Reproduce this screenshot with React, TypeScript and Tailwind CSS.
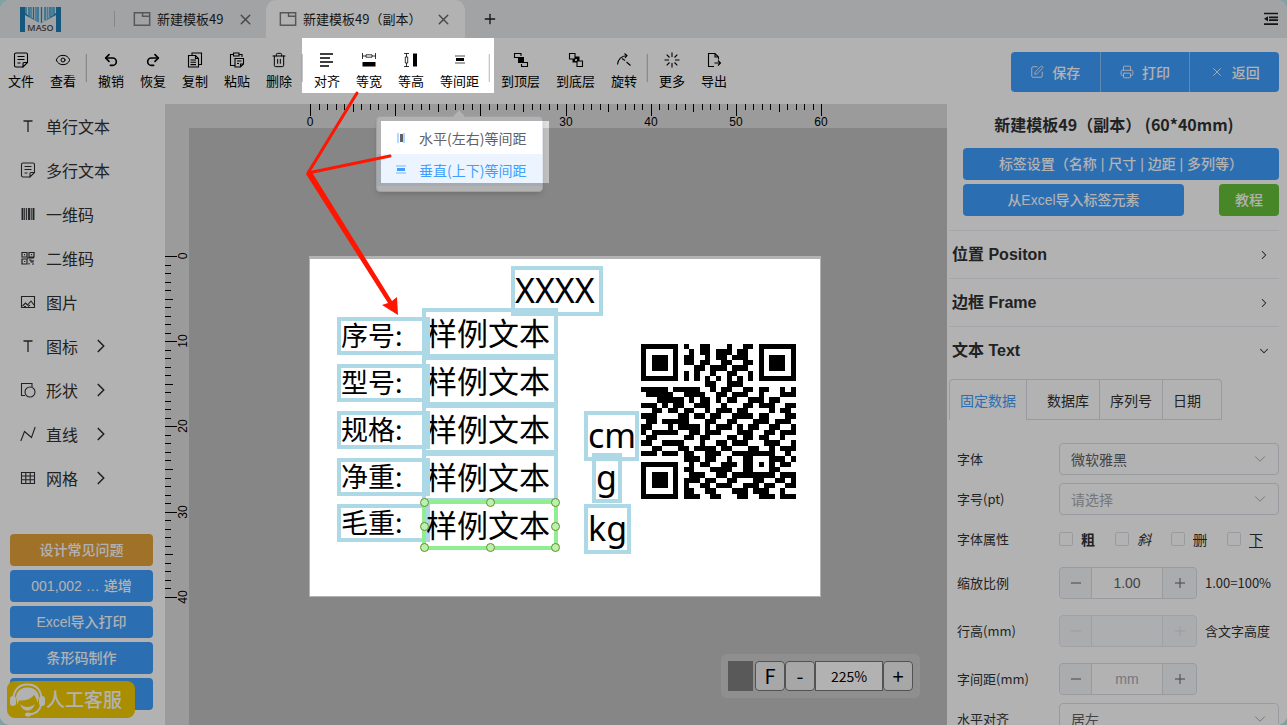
import type { ReactNode } from "react";
import { ChevronDown, ChevronRight, Eye, Minus, Plus, Printer, Redo2, SquarePen, Trash2, Undo2, X } from "lucide-react";

/* ---------- icons ---------- */

function Svg({ children, size = 16, className = "" }: { children: ReactNode; size?: number; className?: string }) {
  return (
    <svg width={size} height={size} viewBox="0 0 16 16" fill="none" stroke="currentColor" strokeWidth="1.1" className={className} aria-hidden="true">
      {children}
    </svg>
  );
}

const NoteIcon = () => (
  <Svg>
    <path d="M9.500 15H3A1.500 1.500 0 0 1 1.500 13.500V2.500A1.500 1.500 0 0 1 3 1H13A1.500 1.500 0 0 1 14.500 2.500V10.500L10 15V11.500A1 1 0 0 1 11 10.500H14.500M4.500 4.500H11.500M4.500 7.500H11.500M4.500 11H7.500" />
  </Svg>
);

const CopyIcon = () => (
  <Svg>
    <path d="M5 3.500V1H14.500V12.500H12M1.500 3.500H8.500L11.500 6.500V15H1.500zM8.500 3.500V6.500H11.500M3.500 8H9M3.500 10.300H9M3.500 12.600H9" />
  </Svg>
);

const PasteIcon = () => (
  <Svg>
    <path d="M5.500 13.500H1.500V2.500H4.500M10 2.500H13V5M4.500 1H10V4H4.500zM6 6.500H14.500V12L11.500 15H6zM14.500 12H11.500V15M8 9H12.500M8 11.500H10" />
  </Svg>
);

const AlignIcon = () => (
  <Svg>
    <path d="M1 2H14M1 6H11M1 10H14M1 14H10" strokeWidth="1.500" />
  </Svg>
);

const SameWidthIcon = () => (
  <Svg>
    <path d="M1.500 1V7M14.500 1V7M1.500 4H5M11 4H14.500M5 2.800H11V5.200H5z" strokeWidth="0.8" />
    <rect x="1.500" y="10" width="13" height="4.500" fill="currentColor" stroke="none" />
  </Svg>
);

const SameHeightIcon = () => (
  <Svg>
    <path d="M1 1.500H6M1 14.500H6M3.500 1.500V5M3.500 11V14.500M2.300 5H4.700V11H2.300z" strokeWidth="0.8" />
    <rect x="10" y="1.500" width="4" height="13" fill="currentColor" stroke="none" />
  </Svg>
);

const SpacingIcon = () => (
  <Svg>
    <rect x="3" y="3" width="10" height="2" fill="currentColor" stroke="none" opacity="0.35" />
    <rect x="4" y="6" width="8" height="3" fill="currentColor" stroke="none" />
    <rect x="3" y="10" width="10" height="2" fill="currentColor" stroke="none" opacity="0.35" />
  </Svg>
);

const SpacingXIcon = () => (
  <Svg>
    <rect x="4" y="3" width="2" height="10" fill="#409eff" stroke="none" opacity="0.4" />
    <rect x="7" y="4" width="3" height="8" fill="currentColor" stroke="none" />
    <rect x="10" y="3" width="2" height="10" fill="#409eff" stroke="none" opacity="0.4" />
  </Svg>
);

const ToFrontIcon = () => (
  <Svg>
    <path d="M5 5.500H1.500V1.500H8V4M11 10.500H14.500V14.500H8.500V12" />
    <rect x="5" y="5" width="6" height="6" fill="currentColor" stroke="none" />
  </Svg>
);

const ToBackIcon = () => (
  <Svg>
    <path d="M1.500 1.500H7V7H1.500zM9 9H14.500V14.500H9z" />
    <path d="M7 4.500H11.500V9H9V7H7zM4.500 7V10.500H9V9H7V7z" fill="currentColor" stroke="none" />
  </Svg>
);

const RotateIcon = () => (
  <Svg>
    <path d="M1.500 12.500C2 8 5 4 11 3.500M8.500 1.500L11 3.500L9 6M6 6.500L9 8.500M10.500 10L14.500 13.500" />
  </Svg>
);

const MoreIcon = () => (
  <Svg>
    <path d="M8 .5V5M8 11V15.500M.5 8H5M11 8H15.500M2.700 2.700L5.500 5.500M10.500 10.500L13.300 13.300M2.700 13.300L5.500 10.500M10.500 5.500L13.300 2.700" />
  </Svg>
);

const ExportIcon = () => (
  <Svg>
    <path d="M12.500 7.500V5L9 1.500H2.500V14.500H8M9 1.500V5H12.500M8.500 11H14.500M12 8.500L14.500 11L12 13.500" />
  </Svg>
);

const TextIcon = () => (
  <Svg>
    <path d="M3.500 3H12.500M8 3V14" strokeWidth="1.300" />
  </Svg>
);

const BarcodeIcon = () => (
  <Svg>
    <path d="M2.500 2V14M9 2V14M13.500 2V14" strokeWidth="1.900" />
    <path d="M4.700 2V14M6.600 2V14M11.200 2V14" strokeWidth="1" />
  </Svg>
);

const QrIcon = () => (
  <Svg>
    <path d="M2 2.500H7V7H2zM9 2.500H14V7H9zM2 9H7V14H2zM4 4.700H5.200M11 4.700H12.200M4 11.500H5.200M7 8H14M9 10H11V12H13V10M9 13V14.500M12 14H14" strokeWidth="1.200" />
  </Svg>
);

const PictureIcon = () => (
  <Svg>
    <path d="M1.500 2.500H14.500V13.500H1.500zM2.500 12L5.500 9L7.500 11L11 7L14 11M4 12.500H6M8 12.500L10 11" />
  </Svg>
);

const ShapeIcon = () => (
  <Svg>
    <path d="M5 13.500H1.500V1.500H12V5" />
    <circle cx="10" cy="10" r="5" />
  </Svg>
);

const LineIcon = () => (
  <Svg>
    <path d="M.8 15L4.500 5.500L11.500 11.500L15.200 1" />
  </Svg>
);

const GridIcon = () => (
  <Svg>
    <path d="M1.500 2.500H14.500V13.500H1.500zM1.500 6H14.500M1.500 9.800H14.500M5.800 2.500V13.500M10.200 2.500V13.500" />
  </Svg>
);

const TabIcon = () => (
  <Svg size={18} className="text-[#7d7d80]">
    <path d="M1.200 2.500H14.800V13.500H1.200zM8.500 2.500V5.500H14.800" strokeWidth="1.300" />
  </Svg>
);

const FoldIcon = () => (
  <Svg>
    <path d="M1 2.500H15M6 6.300H15M6 9.200H15M1 13.200H15" strokeWidth="1.700" />
    <path d="M1 7.800L5 5.200V10.400z" fill="currentColor" stroke="none" />
  </Svg>
);

const SupportIcon = () => (
  <svg width="37" height="34" viewBox="0 0 37 34" fill="none" aria-hidden="true">
    <path d="M4.500 14C6 5 11 1.500 18.500 1.500S31 5 32.500 14" stroke="#fff" strokeWidth="1.800" />
    <path d="M7 14C8 7 13 4.500 18.500 4.500S29 7 30 14L28.500 20C28 17 27 15 25 12C21 17 14 18 10 17.500C9 19 9 21 8.500 22z" fill="#fff" />
    <path d="M11 21C13 26 15.500 27.500 18.500 27.500S24 26 26 21C22 25 15 25 11 21z" fill="#fff" />
    <rect x="1" y="13" width="6" height="10" rx="3" fill="#fff" />
    <rect x="30" y="13" width="6" height="10" rx="3" fill="#fff" />
    <path d="M32 22C31 28 26 31 19 31.500" stroke="#fff" strokeWidth="1.800" />
    <ellipse cx="19" cy="31.500" rx="3" ry="2" fill="#fff" />
  </svg>
);

function Logo() {
  return (
    <svg width="41" height="25" viewBox="0 0 41 25" role="img" aria-label="MASO">
      <rect width="41" height="25" fill="#1f7fb5" />
      <path d="M5 0H36V6L20.500 17L5 6z" fill="#dfe6ea" />
      <path d="M6 0V7M9 0V9M13.500 0V12M18 0V15M21.500 0V16M25 0V13M30 0V10M34 0V8" stroke="#2589bf" strokeWidth="1.300" />
      <path d="M11 0V11M16 0V14M27.500 0V12M32 0V9" stroke="#5fb4dc" strokeWidth="1.800" />
      <path d="M5 8L20.500 16.500L36 8V25H5z" fill="#e8eaec" />
      <text x="20.500" y="24" textAnchor="middle" fontSize="9" fontWeight="600" fontFamily="Open Sans, sans-serif" fill="#4a4a4a">
        MASO
      </text>
    </svg>
  );
}

/* ---------- header + toolbar ---------- */

function Header() {
  return (
    <header className="flex h-[38px] shrink-0 items-stretch bg-[#e8eaec] text-[13px] text-[#1d1d1f]">
      <div className="flex w-[114px] items-center pl-5">
        <Logo />
      </div>
      <div className="my-auto h-4 w-px bg-[#bfc1c4]" />
      <div className="flex w-[151px] items-center pl-[18px]">
        <TabIcon />
        <span className="ml-1.5">新建模板49</span>
        <button aria-label="关闭" className="ml-[14px] text-[#66686b]">
          <X size={17} strokeWidth={2} />
        </button>
      </div>
      <div className="flex w-[199px] items-center rounded-t-[10px] bg-white pl-[13px]">
        <TabIcon />
        <span className="ml-1.5">新建模板49（副本）</span>
        <button aria-label="关闭" className="ml-auto mr-[13px] text-[#66686b]">
          <X size={17} strokeWidth={2} />
        </button>
      </div>
      <button aria-label="新建" className="w-[50px] pl-[17px]">
        <Plus size={16} strokeWidth={2} />
      </button>
      <button aria-label="菜单" className="ml-auto mr-2">
        <FoldIcon />
      </button>
    </header>
  );
}

function Tool({ icon, label, wide = false }: { icon: ReactNode; label: string; wide?: boolean }) {
  return (
    <button className={`flex flex-col items-center gap-[3px] whitespace-nowrap text-[13px] leading-5 ${wide ? "w-[55px]" : "w-[42px]"}`}>
      {icon}
      {label}
    </button>
  );
}

const Divider = () => <div className="ml-px mr-[3px] mt-0.5 h-7 w-[2px] border-r border-[#c4c6cc] bg-[#eee]" />;

function SpacingMenu() {
  return (
    <div className="absolute -left-[56px] top-[64px] z-10 w-[167px] rounded border border-[#e4e7ed] bg-white py-[5px] text-sm shadow-md">
      <div className="absolute -top-[5px] left-[78px] size-2 rotate-45 bg-white" />
      <button className="flex h-8 w-full items-center gap-[10px] whitespace-nowrap pl-4 text-[#606266]">
        <SpacingXIcon />
        水平(左右)等间距
      </button>
      <button className="flex h-8 w-full items-center gap-[10px] whitespace-nowrap bg-[#ecf5ff] pl-4 text-[#409eff]">
        <SpacingIcon />
        垂直(上下)等间距
      </button>
    </div>
  );
}

function Toolbar() {
  return (
    <div className="flex h-[66px] shrink-0 items-start bg-white pt-[14px] text-black">
      <div className="flex">
        <Tool icon={<NoteIcon />} label="文件" />
        <Tool icon={<Eye size={16} strokeWidth={1.5} />} label="查看" />
        <Divider />
        <Tool icon={<Undo2 size={16} strokeWidth={2.5} />} label="撤销" />
        <Tool icon={<Redo2 size={16} strokeWidth={2.5} />} label="恢复" />
        <Tool icon={<CopyIcon />} label="复制" />
        <Tool icon={<PasteIcon />} label="粘贴" />
        <Tool icon={<Trash2 size={16} strokeWidth={1.5} />} label="删除" />
        <Divider />
        <Tool icon={<AlignIcon />} label="对齐" />
        <Tool icon={<SameWidthIcon />} label="等宽" />
        <Tool icon={<SameHeightIcon />} label="等高" />
        <div className="relative">
          <Tool icon={<SpacingIcon />} label="等间距" wide />
          <SpacingMenu />
        </div>
        <Divider />
        <Tool icon={<ToFrontIcon />} label="到顶层" wide />
        <Tool icon={<ToBackIcon />} label="到底层" wide />
        <Tool icon={<RotateIcon />} label="旋转" />
        <Divider />
        <Tool icon={<MoreIcon />} label="更多" />
        <Tool icon={<ExportIcon />} label="导出" />
      </div>
      <div className="ml-auto mr-2 flex h-10 w-[268px] divide-x divide-[#8cc5ff] overflow-hidden rounded bg-[#409eff] text-sm font-medium text-white">
        <button className="flex flex-1 items-center justify-center gap-2">
          <SquarePen size={14} strokeWidth={1.5} />
          保存
        </button>
        <button className="flex flex-1 items-center justify-center gap-2">
          <Printer size={14} strokeWidth={1.5} />
          打印
        </button>
        <button className="flex flex-1 items-center justify-center gap-2">
          <X size={14} strokeWidth={1.5} />
          返回
        </button>
      </div>
    </div>
  );
}

/* ---------- left sidebar ---------- */

const tools = [
  { label: "单行文本", icon: <TextIcon /> },
  { label: "多行文本", icon: <NoteIcon /> },
  { label: "一维码", icon: <BarcodeIcon /> },
  { label: "二维码", icon: <QrIcon /> },
  { label: "图片", icon: <PictureIcon /> },
  { label: "图标", icon: <TextIcon />, more: true },
  { label: "形状", icon: <ShapeIcon />, more: true },
  { label: "直线", icon: <LineIcon />, more: true },
  { label: "网格", icon: <GridIcon />, more: true },
];

function Sidebar() {
  return (
    <aside className="relative flex w-[165px] shrink-0 flex-col overflow-hidden bg-white">
      {tools.map((t) => (
        <button key={t.label} className="flex h-11 shrink-0 items-center pl-5 text-base text-[#303133]">
          {t.icon}
          <span className="ml-[10px]">{t.label}</span>
          {t.more && <ChevronRight size={22} strokeWidth={1.8} className="ml-3" />}
        </button>
      ))}
      <div className="ml-[10px] mr-3 mt-[34px] flex flex-col gap-1 font-['Liberation_Sans','Noto_Sans_CJK_SC',sans-serif] text-sm font-medium text-white">
        <button className="h-8 shrink-0 rounded bg-[#e6a23c]">设计常见问题</button>
        <button className="h-8 shrink-0 rounded bg-[#409eff]">001,002 … 递增</button>
        <button className="h-8 shrink-0 rounded bg-[#409eff]">Excel导入打印</button>
        <button className="h-8 shrink-0 rounded bg-[#409eff]">条形码制作</button>
        <button aria-label="帮助" className="h-8 shrink-0 rounded bg-[#409eff]" />
      </div>
      <button className="absolute bottom-[7px] left-[7px] flex h-[37px] w-32 items-center whitespace-nowrap rounded-lg bg-[#f1cc00] pl-0.5 text-[19px] font-medium text-white">
        <SupportIcon />
        人工客服
      </button>
    </aside>
  );
}

/* ---------- canvas ---------- */

const MM = 8.52;
const tickLength = (i: number) => (i % 10 === 0 ? 12 : i % 5 === 0 ? 8 : 6);

function TopRuler() {
  return (
    <svg className="h-6 w-full shrink-0 bg-[#dfdfdf] font-['Liberation_Sans',sans-serif] text-xs" aria-hidden="true">
      {Array.from({ length: 61 }, (_, i) => {
        const x = Math.round(145 + i * MM);
        return (
          <g key={i}>
            <rect x={x} y="0" width="1" height={tickLength(i)} />
            {i % 10 === 0 && (
              <text x={x} y="22" textAnchor="middle">
                {i}
              </text>
            )}
          </g>
        );
      })}
    </svg>
  );
}

function LeftRuler() {
  return (
    <svg className="h-full w-6 shrink-0 bg-[#dfdfdf] font-['Liberation_Sans',sans-serif] text-xs" aria-hidden="true">
      {Array.from({ length: 41 }, (_, i) => {
        const y = Math.round(128 + i * MM);
        return (
          <g key={i}>
            <rect x="0" y={y} width={tickLength(i)} height="1" />
            {i % 10 === 0 && (
              <text transform={`translate(22 ${y}) rotate(-90)`} textAnchor="middle">
                {i}
              </text>
            )}
          </g>
        );
      })}
    </svg>
  );
}

const qrRows = [
  "11111110100110001001101111111",
  "10000010010110111011001000001",
  "10111010110010110111001011101",
  "10111010110110011001101011101",
  "10111010001101110111001011101",
  "10000010101001001100101000001",
  "11111110101010101010101111111",
  "00000000000011001110000000000",
  "11111011111001011001101100101",
  "01111100111100110111001000111",
  "00011111010110101100111011000",
  "11101011001110010001101110011",
  "00110110110010111011000010110",
  "11100001101101100111101100011",
  "01101111100011001100011101110",
  "11000101111010111010110011001",
  "10111110011011100011100110111",
  "01100000110110001101101100100",
  "11001111000100110111000111001",
  "00110001101111011000110010111",
  "11101110110011100111111110010",
  "00000000111011001001100011101",
  "11111110010110011101101010110",
  "10000010110001111001100011000",
  "10111010011100110111111110111",
  "10111010111011001100011001101",
  "10111010100110111001110110011",
  "10000010110011000111011100100",
  "11111110111001100011001110111",
];

function QrCode() {
  return (
    <svg viewBox="0 0 29 29" className="absolute left-[332px] top-[88px] size-[155px]" role="img" aria-label="二维码" shapeRendering="crispEdges">
      {qrRows.map((row, y) => row.split("").map((bit, x) => bit === "1" && <rect key={`${x}-${y}`} x={x} y={y} width="1" height="1" />))}
    </svg>
  );
}

const samples = [
  { text: "样例文本", place: "top-[52px]" },
  { text: "样例文本", place: "top-[100px]" },
  { text: "样例文本", place: "top-[148px]" },
  { text: "样例文本", place: "top-[196px]" },
];

const labels = [
  { text: "序号:", place: "top-[61px]" },
  { text: "型号:", place: "top-[108px]" },
  { text: "规格:", place: "top-[155px]" },
  { text: "净重:", place: "top-[202px]" },
  { text: "毛重:", place: "top-[248px]" },
];

const units = [
  { text: "XXXX", place: "left-[202px] top-[10px] w-[92px]" },
  { text: "cm", place: "left-[275px] top-[155px] w-[55px]" },
  { text: "g", place: "left-[283px] top-[197px] w-[30px]" },
  { text: "kg", place: "left-[275px] top-[248px] w-[47px]" },
];

const handles = [
  "left-[111px] top-[242px]",
  "left-[177px] top-[242px]",
  "left-[242px] top-[242px]",
  "left-[111px] top-[266px]",
  "left-[242px] top-[266px]",
  "left-[111px] top-[287px]",
  "left-[177px] top-[287px]",
  "left-[242px] top-[287px]",
];

function Paper() {
  return (
    <div className="absolute left-[120px] top-[128px] h-[341px] w-[512px] bg-white text-black">
      {samples.map((s) => (
        <div key={s.place} className={`absolute left-[113px] h-[50px] w-[136px] whitespace-nowrap border-4 border-[#add8e6] text-[31px] leading-10 ${s.place}`}>
          {s.text}
        </div>
      ))}
      {labels.map((l) => (
        <div key={l.place} className={`absolute left-7 h-[38px] w-[93px] whitespace-nowrap border-4 border-[#add8e6] text-[27px] leading-7 ${l.place}`}>
          {l.text}
        </div>
      ))}
      {units.map((u) => (
        <div key={u.text} className={`absolute h-[50px] whitespace-nowrap border-4 border-[#add8e6] font-['Noto_Sans',sans-serif] text-[34px] leading-10 ${u.place}`}>
          {u.text}
        </div>
      ))}
      <div className="absolute left-[113px] top-[244px] h-[50px] w-[136px] whitespace-nowrap border-4 border-[#90ee90] text-[31px] leading-10">样例文本</div>
      {handles.map((h) => (
        <div key={h} className={`absolute size-[9px] rounded-full border border-[#6b8e23] bg-[#b8f2b0] ${h}`} />
      ))}
      <QrCode />
    </div>
  );
}

function Canvas() {
  return (
    <main className="flex min-w-0 flex-1 flex-col">
      <TopRuler />
      <div className="flex min-h-0 flex-1">
        <LeftRuler />
        <div className="relative min-w-0 flex-1 overflow-hidden bg-[#c0c0c0]">
          <Paper />
          <div className="absolute bottom-[27px] right-[27px] flex items-center rounded-md bg-[#cdcdcd] p-[7px] text-black">
            <div className="mr-0.5 h-[30px] w-[25px] bg-[#808080]" />
            <button className="h-[30px] w-[30px] rounded-sm border border-[#767676] bg-[#efefef] text-xl leading-none">F</button>
            <button className="h-[30px] w-[30px] rounded-sm border border-[#767676] bg-[#efefef] text-xl leading-none">-</button>
            <input aria-label="缩放" defaultValue="225%" className="h-[30px] w-[68px] border border-[#767676] bg-white text-center text-sm" />
            <button className="h-[30px] w-[30px] rounded-sm border border-[#767676] bg-[#efefef] text-xl leading-none">+</button>
          </div>
        </div>
      </div>
    </main>
  );
}

/* ---------- property panel ---------- */

function Section({ title, open = false }: { title: string; open?: boolean }) {
  return (
    <button className="flex h-12 shrink-0 items-center justify-between border-t border-[#ebeef5] pl-[3px] pr-2 font-['Liberation_Sans','Noto_Sans_CJK_SC',sans-serif] text-base font-bold text-[#303133]">
      {title}
      {open ? <ChevronDown size={14} strokeWidth={1.8} /> : <ChevronRight size={14} strokeWidth={1.8} />}
    </button>
  );
}

function Select({ id, label, options, muted = false }: { id: string; label: string; options: string[]; muted?: boolean }) {
  return (
    <div className="flex h-8 shrink-0 items-center">
      <label htmlFor={id} className="w-[102px] shrink-0 text-[13px] text-[#303133]">
        {label}
      </label>
      <div className="relative flex-1">
        <select
          id={id}
          className={`h-8 w-full appearance-none rounded border border-[#dcdfe6] bg-transparent pl-[11px] text-sm ${muted ? "text-[#a8abb2]" : "text-[#606266]"}`}
        >
          {options.map((o) => (
            <option key={o}>{o}</option>
          ))}
        </select>
        <ChevronDown size={18} strokeWidth={1.3} className="pointer-events-none absolute right-[10px] top-[7px] text-[#a8abb2]" />
      </div>
    </div>
  );
}

type NumberFieldProps = {
  id: string;
  label: string;
  value?: string;
  placeholder?: string;
  note?: string;
  disabled?: boolean;
};

function NumberField({ id, label, value = "", placeholder = "", note = "", disabled = false }: NumberFieldProps) {
  const tone = disabled ? "text-[#dcdfe6]" : "text-[#606266]";
  return (
    <div className="flex h-8 shrink-0 items-center whitespace-nowrap text-[13px] text-[#303133]">
      <label htmlFor={id} className="w-[102px] shrink-0">
        {label}
      </label>
      <div className={`flex h-8 w-[138px] shrink-0 divide-x overflow-hidden rounded border bg-[#f5f7fa] ${disabled ? "divide-[#e4e7ed] border-[#e4e7ed]" : "divide-[#dcdfe6] border-[#dcdfe6]"}`}>
        <button type="button" aria-label="减少" disabled={disabled} className={`flex w-8 shrink-0 items-center justify-center ${tone}`}>
          <Minus size={16} strokeWidth={1.5} />
        </button>
        <input
          id={id}
          defaultValue={value}
          placeholder={placeholder}
          disabled={disabled}
          className={`min-w-0 flex-1 text-center font-['Liberation_Sans',sans-serif] text-sm text-[#606266] placeholder:text-[#a8abb2] ${disabled ? "bg-[#f8f9fb]" : "bg-white"}`}
        />
        <button type="button" aria-label="增加" disabled={disabled} className={`flex w-[33px] shrink-0 items-center justify-center ${tone}`}>
          <Plus size={16} strokeWidth={1.5} />
        </button>
      </div>
      <span className="ml-2">{note}</span>
    </div>
  );
}

const fontStyles = [
  { text: "粗", className: "font-bold" },
  { text: "斜", className: "italic" },
  { text: "删", className: "line-through" },
  { text: "下", className: "underline underline-offset-2" },
];

function Panel() {
  return (
    <aside className="flex w-[340px] shrink-0 flex-col overflow-hidden bg-white pl-0.5 pr-2">
      <h1 className="flex h-11 shrink-0 items-center justify-center pb-1 text-base font-bold text-[#303133]">新建模板49（副本） (60*40mm)</h1>
      <div className="mb-[14px] ml-[14px] flex shrink-0 flex-wrap justify-between gap-1 font-['Liberation_Sans','Noto_Sans_CJK_SC',sans-serif] text-sm font-medium text-white">
        <button className="h-8 w-full rounded bg-[#409eff]">标签设置（名称 | 尺寸 | 边距 | 多列等）</button>
        <button className="h-8 w-[221px] rounded bg-[#409eff]">从Excel导入标签元素</button>
        <button className="h-8 w-[60px] rounded bg-[#67c23a]">教程</button>
      </div>
      <Section title="位置 Positon" />
      <Section title="边框 Frame" />
      <Section title="文本 Text" open />

      <div className="mt-[5px] flex h-[41px] w-[273px] shrink-0 overflow-hidden rounded-t border border-b-0 border-[#dcdfe6] text-sm text-[#303133]">
        <button className="w-[76px] text-[#409eff]">固定数据</button>
        <button className="w-[73px] border-b border-l border-[#dcdfe6] pl-[10px]">数据库</button>
        <button className="w-[63px] border-b border-l border-[#dcdfe6]">序列号</button>
        <button className="flex-1 border-b border-l border-[#dcdfe6] pr-[10px]">日期</button>
      </div>

      <form className="mt-[23px] flex shrink-0 flex-col pl-2">
        <div className="mb-2 flex flex-col gap-2">
          <Select id="font" label="字体" options={["微软雅黑"]} />
          <Select id="size" label="字号(pt)" options={["请选择"]} muted />
          <div className="flex h-8 items-center text-[13px] text-[#303133]">
            <span className="w-[102px] shrink-0">字体属性</span>
            {fontStyles.map((f) => (
              <label key={f.text} className="flex w-14 shrink-0 items-center gap-2 text-sm text-[#303133]">
                <input type="checkbox" className="size-[14px] appearance-none rounded-[2px] border border-[#dcdfe6] bg-white" />
                <span className={f.className}>{f.text}</span>
              </label>
            ))}
          </div>
        </div>
        <div className="mb-2 mt-1 flex flex-col gap-4">
          <NumberField id="scale" label="缩放比例" value="1.00" note="1.00=100%" />
          <NumberField id="line" label="行高(mm)" note="含文字高度" disabled />
          <NumberField id="spacing" label="字间距(mm)" placeholder="mm" />
        </div>
        <Select id="align" label="水平对齐" options={["居左"]} />
      </form>
    </aside>
  );
}

/* ---------- guide overlay ---------- */

function Guide() {
  return (
    <div className="pointer-events-none absolute inset-0 z-20">
      {/* dimmed layer with cut-outs for the toolbar group, the menu and the label */}
      <div className="absolute inset-0 bg-black/30 [clip-path:polygon(evenodd,0_0,100%_0,100%_100%,0_100%,0_0,302px_38px,494px_38px,494px_93px,302px_93px,302px_38px,0_0,381px_121px,549px_121px,549px_183px,381px_183px,381px_121px,0_0,310px_259px,820px_259px,820px_596px,310px_596px,310px_259px,0_0)]" />
      <svg className="absolute inset-0 size-full" aria-hidden="true">
        <path d="M357 93L308 173L390 156" fill="none" stroke="#ff1500" strokeWidth="3" strokeLinecap="round" strokeLinejoin="round" />
        <path d="M306 174L309 171L313 174L392 301L397 297L398 315L382 305L388 303z" fill="#ff1500" />
      </svg>
    </div>
  );
}

export default function App() {
  return (
    <div className="h-screen bg-[#83a0a4] font-['Noto_Sans_CJK_SC',sans-serif]">
      <div className="relative flex h-full flex-col overflow-hidden rounded-[10px]">
        <Header />
        <Toolbar />
        <div className="flex min-h-0 flex-1">
          <Sidebar />
          <Canvas />
          <Panel />
        </div>
        <Guide />
      </div>
    </div>
  );
}
